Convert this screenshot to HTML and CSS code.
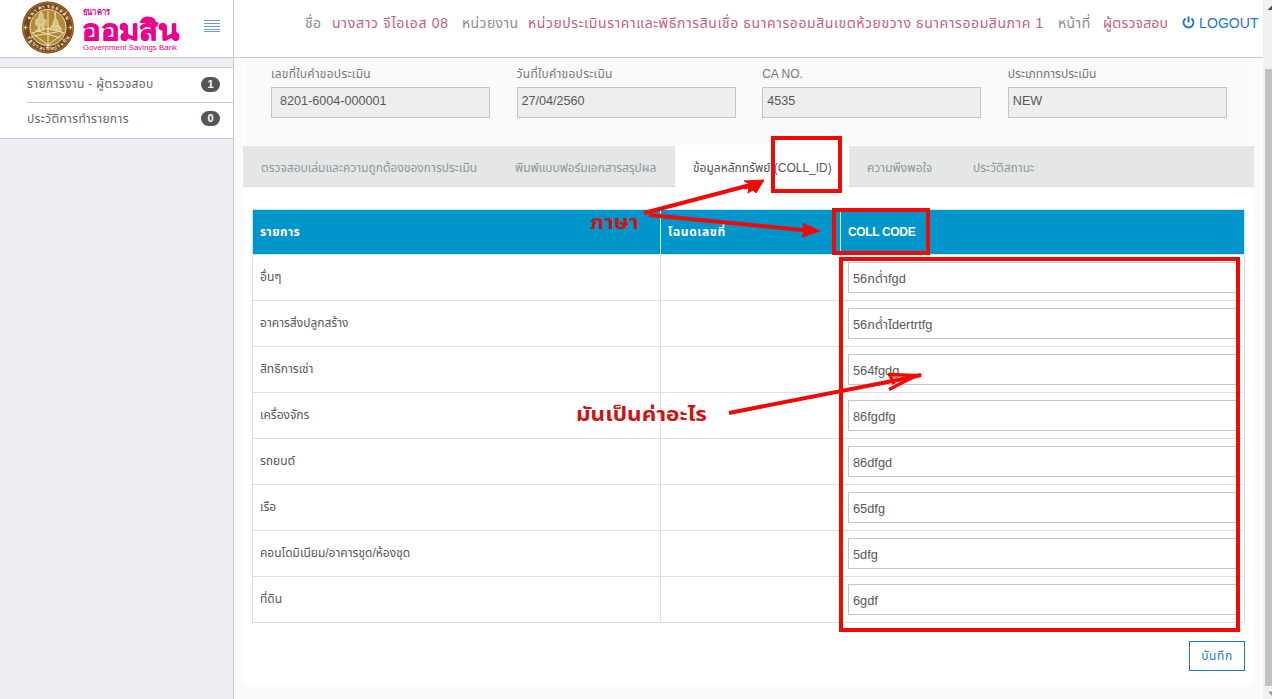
FILE: index.html
```html
<!DOCTYPE html>
<html lang="th">
<head>
<meta charset="utf-8">
<title>ธนาคารออมสิน</title>
<link rel="stylesheet" href="styles.css">
</head>
<body>
<div class="app">
  <aside class="sidebar">
    <div class="brand">
      <svg class="logo" width="160" height="56" viewBox="0 0 160 56">
        <defs>
          <path id="sealTop" d="M7.5 27.5a19.5 19.5 0 0 1 39 0"/>
          <path id="sealBottom" d="M4 27.5a23 23 0 0 0 46 0"/>
        </defs>
        <circle cx="27" cy="27.500" r="26" fill="#794719"/>
        <circle cx="27" cy="27.500" r="24.700" fill="none" stroke="#b98b4b" stroke-width=".7"/>
        <circle cx="27" cy="27.500" r="18" fill="#b18a36" stroke="#f1e2bd" stroke-width="1"/>
        <text class="seal-text"><textPath href="#sealTop" startOffset="8" textLength="45">ธนาคารออมสิน</textPath></text>
        <text class="seal-text"><textPath href="#sealBottom" startOffset="10" textLength="52">รัฐบาลเป็นประกัน</textPath></text>
        <path d="M2.500 27.500h4M4.500 25.500v4M47.500 27.500h4M49.500 25.500v4" stroke="#ead7a7" stroke-width="1.200"/>
        <path d="M27 11v21M11 33l16-5 16 5-16 12zM13 36l28-5M14 30l25 8M27 29v15" fill="none" stroke="#f1e2bd" stroke-width="1"/>
        <path d="M18 15l2-3 2 3v4l2 1-1 5v5h-2v-5h-2v5h-2v-5l-2-1 1-5 2-1zM15 19v7M25 19v7M34 12l1 7 2 3v3l3 3v2H29v-2l3-3v-3l2-3zM30 26h9" fill="#d9c17c" stroke="#f1e2bd" stroke-width=".8"/>
        <text class="logo-small" x="62" y="15" textLength="27" lengthAdjust="spacingAndGlyphs">ธนาคาร</text>
        <text class="logo-big" x="61" y="39.500" textLength="97" lengthAdjust="spacingAndGlyphs">ออมสิน</text>
        <text class="logo-en" x="62" y="50" textLength="94" lengthAdjust="spacingAndGlyphs">Government Savings Bank</text>
      </svg>
      <svg class="burger" width="16" height="13" viewBox="0 0 16 13"><path d="M0 .5h16M0 3.500h16M0 6.500h16M0 9.500h16M0 11.500h16" stroke="#6e9bc8" stroke-width="1"/></svg>
    </div>
    <nav class="menu">
      <a class="menu-item"><span class="t1">รายการงาน - ผู้ตรวจสอบ</span><b class="badge">1</b></a>
      <a class="menu-item"><span class="t2">ประวัติการทำรายการ</span><b class="badge">0</b></a>
    </nav>
  </aside>

  <div class="page">
    <header class="topbar">
      <span class="k k1">ชื่อ</span><span class="v v1">นางสาว จีไอเอส 08</span>
      <span class="k k2">หน่วยงาน</span><span class="v v2">หน่วยประเมินราคาและพิธีการสินเชื่อ ธนาคารออมสินเขตห้วยขวาง ธนาคารออมสินภาค 1</span>
      <span class="k k3">หน้าที่</span><span class="v v3">ผู้ตรวจสอบ</span>
      <a class="logout"><svg width="13" height="13" viewBox="0 0 13 13"><path d="M3.600 2.500a5 5 0 1 0 5.800 0M6.500.5v6" fill="none" stroke="#1a73d9" stroke-width="1.900"/></svg><span>LOGOUT</span></a>
    </header>
    <main class="content">
      <div class="panel">
        <form class="fields">
          <label class="field"><span class="cap wide">เลขที่ใบคำขอประเมิน</span><span class="ro first">8201-6004-000001</span></label>
          <label class="field"><span class="cap wide">วันที่ใบคำขอประเมิน</span><span class="ro">27/04/2560</span></label>
          <label class="field"><span class="cap">CA NO.</span><span class="ro">4535</span></label>
          <label class="field"><span class="cap">ประเภทการประเมิน</span><span class="ro">NEW</span></label>
        </form>
        <div class="tabs">
          <a class="tab w1"><span>ตรวจสอบเล่มและความถูกต้องของการประเมิน</span></a>
          <a class="tab w2"><span>พิมพ์แบบฟอร์มเอกสารสรุปผล</span></a>
          <a class="tab w3 active"><span>ข้อมูลหลักทรัพย์ (COLL_ID)</span></a>
          <a class="tab w4"><span>ความพึงพอใจ</span></a>
          <a class="tab w5"><span>ประวัติสถานะ</span></a>
        </div>
        <div class="body">
          <table class="grid">
            <thead><tr><th class="c1">รายการ</th><th class="c2">โฉนดเลขที่</th><th class="c3">COLL CODE</th></tr></thead>
            <tbody>
              <tr><td>อื่นๆ</td><td></td><td><div class="inp">56กด่ำfgd</div></td></tr>
              <tr><td>อาคารสิ่งปลูกสร้าง</td><td></td><td><div class="inp">56กด่ำไdertrtfg</div></td></tr>
              <tr><td>สิทธิการเช่า</td><td></td><td><div class="inp">564fgdg</div></td></tr>
              <tr><td>เครื่องจักร</td><td></td><td><div class="inp">86fgdfg</div></td></tr>
              <tr><td>รถยนต์</td><td></td><td><div class="inp">86dfgd</div></td></tr>
              <tr><td>เรือ</td><td></td><td><div class="inp">65dfg</div></td></tr>
              <tr><td>คอนโดมิเนียม/อาคารชุด/ห้องชุด</td><td></td><td><div class="inp">5dfg</div></td></tr>
              <tr><td>ที่ดิน</td><td></td><td><div class="inp">6gdf</div></td></tr>
            </tbody>
          </table>
          <div class="actions"><a class="save">บันทึก</a></div>
        </div>
      </div>
    </main>
  </div>
  <div class="scroll">
    <svg width="9" height="12" viewBox="0 0 9 12"><path d="M4.500 10L9 5.500V10z" fill="#505050"/></svg>
    <div class="thumb"></div>
    <svg width="9" height="12" viewBox="0 0 9 12"><path d="M5 5.500h4V10z" fill="#9a9a9a"/></svg>
  </div>
</div>

<svg class="notes" width="1272" height="699" viewBox="0 0 1272 699">
  <g fill="none" stroke="#f00a06" stroke-width="4">
    <rect x="773" y="138" width="67" height="53"/>
    <rect x="834" y="210" width="94" height="43"/>
    <rect x="841" y="259" width="397" height="371"/>
    <path d="M644 213L758 183"/>
    <path d="M649 215L812 231"/>
    <path d="M729 413L913 377"/>
  </g>
  <g fill="#f00a06" stroke="#f00a06" stroke-width="1">
    <path d="M744 181l20-1-8 13-3-3-5 3 1-5-5 1 6-5z"/>
    <path d="M803 223.500l17 7.500-18 6 2-5z"/>
  </g>
  <path d="M888 374.500l28 1-27 14M890 375l4 9" fill="none" stroke="#f00a06" stroke-width="3.500"/>
  <path d="M904 379l17-4" stroke="#f00a06" stroke-width="4"/>
  <text class="note" x="590" y="229" textLength="49" lengthAdjust="spacingAndGlyphs">ภาษา</text>
  <text class="note" x="576" y="421" textLength="131" lengthAdjust="spacingAndGlyphs">มันเป็นค่าอะไร</text>
</svg>
</body>
</html>
```
FILE: styles.css
```css
* { box-sizing: border-box; }
body { margin: 0; font: 12px/16px "Liberation Sans", "Noto Sans Thai", "Noto Sans", sans-serif; color: #58585a; overflow: hidden; }
.app { display: flex; height: 699px; background: #fafafa; }
.sidebar { width: 234px; background: #eeeef4; border-right: 1px solid #c8c8cc; }
.brand { display: flex; height: 58px; background: #fff; border-bottom: 1px solid #c8c8cc; padding-left: 21px; }
.burger { margin: 20px 0 0 23px; }
.menu { margin-top: 9px; height: 72px; background: #fff; border: solid #c8c8cc; border-width: 1px 0; padding-left: 27px; }
.menu-item { display: flex; justify-content: space-between; align-items: center; height: 35px; padding: 0 13px 2px 0; white-space: nowrap; color: #666; letter-spacing: .35px; }
.menu-item:first-child { border-bottom: 1px solid #c8c8cc; }
.menu-item:last-child { height: 33px; }
.badge { width: 19px; height: 15px; border-radius: 8px; background: #555; color: #fff; font-size: 11px; line-height: 15px; text-align: center; letter-spacing: 0; }
.page { flex: 1; display: flex; flex-direction: column; width: 1029px; }
.topbar { display: flex; height: 58px; background: #fff; border-bottom: 1px solid #c8c8cc; padding: 14px 0 0 71px; font-size: 14px; line-height: 18px; white-space: nowrap; }
.k { color: #8b8b8b; letter-spacing: .4px; }
.v { color: #c4617a; }
.k1 { width: 27px; }
.v1 { width: 130px; letter-spacing: .72px; }
.k2 { width: 66px; }
.v2 { width: 530px; letter-spacing: .58px; }
.k3 { width: 45px; }
.v3 { width: 79px; letter-spacing: .2px; }
.logout { display: flex; color: #1a73d9; letter-spacing: .1px; }
.logout svg { margin: 2px 4px 0 0; }
.content { flex: 1; padding: 0 9px 14px; }
.panel { height: 627px; background: #fff; }
.fields { display: grid; grid-template-columns: repeat(4, 219px); column-gap: 26.600px; height: 87px; margin: 0 1px; padding: 8px 27px 0; background: #fafafa; }
.cap { display: block; height: 21px; color: #777; white-space: nowrap; }
.cap.wide { letter-spacing: .27px; }
.ro { display: block; height: 31px; background: #eee; border: 1px solid #c4c4c9; padding-left: 4px; font-size: 12.600px; line-height: 27px; }
.ro.first { padding-left: 8px; }
.tabs { display: flex; height: 41px; margin-top: 1px; background: #e4e7e6; border-bottom: 1px solid #dadcdb; }
.tab { height: 41px; padding-left: 18px; line-height: 44px; color: #8d989d; white-space: nowrap; }
.tab.active { background: #fff; color: #555; }
.w1 { width: 254px; }
.w2 { width: 178px; letter-spacing: -.1px; }
.w3 { width: 174px; }
.w4 { width: 106px; }
.body { padding: 22px 9px 0; }
.grid { width: 993px; table-layout: fixed; border-collapse: collapse; }
.grid th, .grid td { height: 46px; padding: 0 0 2px 7px; border: 1px solid #dedede; text-align: left; white-space: nowrap; }
.grid th { height: 45px; padding-bottom: 0; background: #0095cb; color: #fff; border-color: #c8e9f3; }
.grid .c1 { width: 408px; letter-spacing: .4px; }
.grid .c2 { width: 180px; letter-spacing: .6px; }
.grid .c3 { letter-spacing: -.35px; }
.inp { width: 390px; height: 31px; margin-top: 1px; border: 1px solid #c4c4c9; padding-left: 4px; font-size: 12.800px; line-height: 31px; }
.actions { display: flex; justify-content: flex-end; padding-top: 18px; }
.save { width: 56px; height: 30px; border: 1px solid #2379b5; color: #2379d0; text-align: center; line-height: 28px; letter-spacing: .6px; }
.scroll { width: 9px; background: #f1f1f1; display: flex; flex-direction: column; }
.scroll svg { height: 12px; }
.thumb { margin: 57px 0 0 2px; height: 617px; background: #c1c1c1; }
.notes { position: absolute; left: 0; top: 0; }
.note { font: bold 19px "Liberation Sans", "Noto Sans Thai", sans-serif; fill: #d01212; }
.seal-text { font: bold 5px "Liberation Sans", sans-serif; fill: #f7ecd0; }
.logo-small { font: bold 9px "Liberation Sans", sans-serif; fill: #ec008c; }
.logo-big { font: bold 28px "Liberation Sans", sans-serif; fill: #ec008c; stroke: #ec008c; stroke-width: .8px; }
.logo-en { font: 8px "Liberation Sans", sans-serif; fill: #ec008c; }
```
